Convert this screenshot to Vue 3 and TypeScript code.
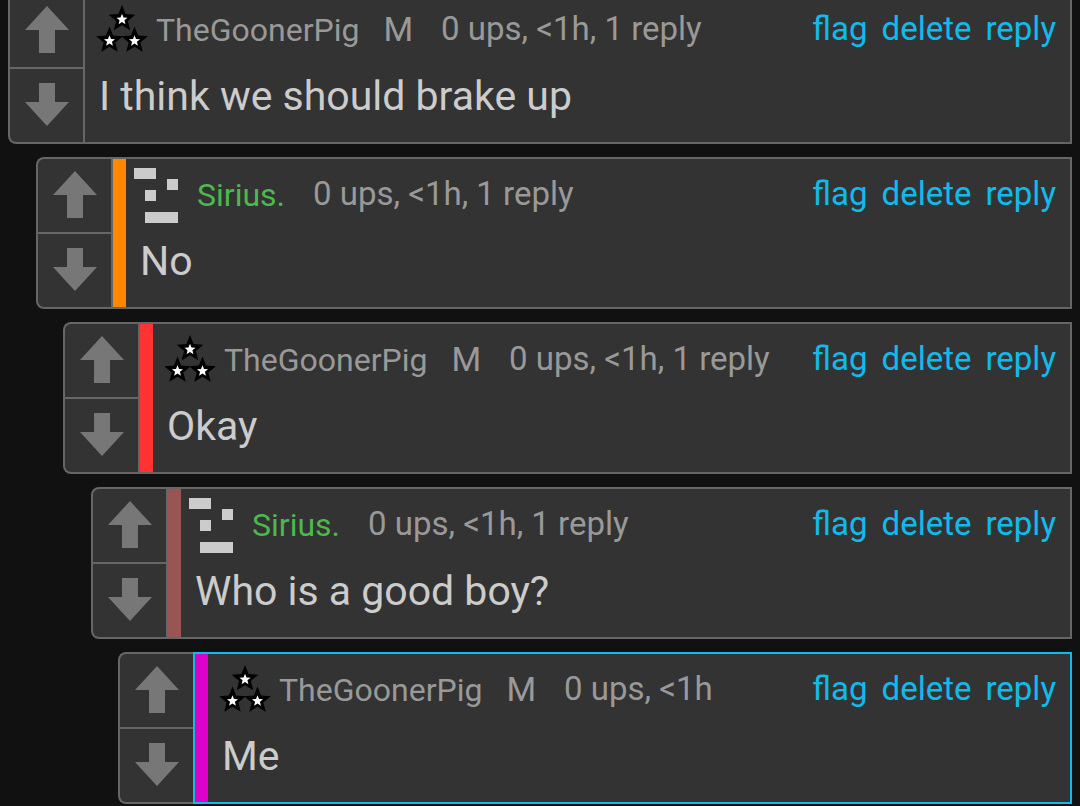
<script setup lang="ts">
interface Comment {
  id: number
  user: string
  avatar: 'stars' | 'pixels'
  highlighted: boolean
  badge?: string
  stats: string
  text: string
  stripe?: string
  active?: boolean
}

const comments: Comment[] = [
  { id: 1, user: 'TheGoonerPig', avatar: 'stars', highlighted: false, badge: 'M', stats: '0 ups, <1h, 1 reply', text: 'I think we should brake up' },
  { id: 2, user: 'Sirius.', avatar: 'pixels', highlighted: true, stats: '0 ups, <1h, 1 reply', text: 'No', stripe: 'orange' },
  { id: 3, user: 'TheGoonerPig', avatar: 'stars', highlighted: false, badge: 'M', stats: '0 ups, <1h, 1 reply', text: 'Okay', stripe: 'red' },
  { id: 4, user: 'Sirius.', avatar: 'pixels', highlighted: true, stats: '0 ups, <1h, 1 reply', text: 'Who is a good boy?', stripe: 'brown' },
  { id: 5, user: 'TheGoonerPig', avatar: 'stars', highlighted: false, badge: 'M', stats: '0 ups, <1h', text: 'Me', stripe: 'magenta', active: true },
]

const actions: string[] = ['flag', 'delete', 'reply']

// Each reply level is indented by 27.5px, snapped to whole pixels.
const indent = (depth: number) => ({ marginLeft: `${Math.round(depth * 27.5)}px` })

function starPoints(cx: number, cy: number, r: number): string {
  return Array.from({ length: 10 }, (_, i) => {
    const radius = i % 2 === 0 ? r : r * 0.44
    const angle = (Math.PI / 5) * i - Math.PI / 2
    return `${(cx + radius * Math.cos(angle)).toFixed(2)},${(cy + radius * Math.sin(angle)).toFixed(2)}`
  }).join(' ')
}

const stars = [[29, 16], [16.5, 37.5], [41.5, 37.5]].map(([x, y]) => ({
  outer: starPoints(x, y, 14),
  inner: starPoints(x, y + 0.5, 5.8),
}))
</script>

<template>
  <main class="thread">
    <article v-for="(c, depth) in comments" :key="c.id" class="comment" :style="indent(depth)">
      <div class="votes">
        <button type="button" class="vote up" aria-label="Upvote">
          <svg width="44" height="47" viewBox="0 0 44 47"><path d="M22 0 44 24H30V47H14V24H0Z" /></svg>
        </button>
        <button type="button" class="vote down" aria-label="Downvote">
          <svg width="44" height="43" viewBox="0 0 44 43"><path d="M14 0H30V19H44L22 43 0 19H14Z" /></svg>
        </button>
      </div>
      <div class="body" :class="{ active: c.active }">
        <div v-if="c.stripe" class="stripe" :class="c.stripe"></div>
        <div class="content">
          <header class="head">
            <svg v-if="c.avatar === 'stars'" class="avatar" viewBox="0 0 55 55" aria-hidden="true">
              <g v-for="s in stars" :key="s.outer">
                <polygon :points="s.outer" fill="#000" />
                <polygon :points="s.inner" fill="#fff" />
              </g>
            </svg>
            <svg v-else class="avatar" viewBox="0 0 55 55" aria-hidden="true">
              <path d="M0 0H22V11H0ZM33 11H44V22H33ZM11 22H22V33H11ZM11 44H44V55H11Z" fill="#ccc" />
            </svg>
            <a href="#" class="user" :class="{ highlighted: c.highlighted }">{{ c.user }}</a>
            <span v-if="c.badge" class="badge">{{ c.badge }}</span>
            <span class="stats">{{ c.stats }}</span>
            <nav class="actions">
              <a v-for="a in actions" :key="a" href="#">{{ a }}</a>
            </nav>
          </header>
          <p class="text">{{ c.text }}</p>
        </div>
      </div>
    </article>
  </main>
</template>

<style>
body {
  margin: 0;
  background: #111;
  overflow: hidden;
}
</style>

<style scoped>
.thread {
  display: flex;
  flex-direction: column;
  gap: 13px;
  margin: -8px 8px 0;
  font-family: Roboto, 'Liberation Sans', sans-serif;
  color: #999;
}
.comment {
  display: flex;
}
.votes {
  display: grid;
  grid-template-rows: 1fr 1fr;
  gap: 2px;
  box-sizing: border-box;
  width: 75px;
  flex: none;
  overflow: hidden;
  border: 2px solid #666;
  border-right: 0;
  border-radius: 8px 0 0 8px;
  background: #666;
}
.vote {
  display: flex;
  justify-content: center;
  align-items: flex-start;
  padding: 0;
  border: 0;
  background: #333;
  cursor: pointer;
}
.vote svg {
  fill: #777;
}
.up {
  padding-top: 12px;
}
.down {
  padding-top: 14px;
}
.body {
  display: flex;
  flex: 1;
  min-width: 0;
  border: 2px solid #666;
  background: #333;
}
.body.active {
  border-color: #10bbec;
}
.stripe {
  flex: none;
  width: 13px;
}
.orange { background: #f80; }
.red { background: #f33; }
.brown { background: #955; }
.magenta { background: #d0c; }
.content {
  flex: 1;
  min-width: 0;
  padding: 9px 14px 22px 8px;
}
.head {
  display: flex;
  align-items: flex-start;
  height: 55px;
  font-size: 33px;
  line-height: 40px;
  white-space: nowrap;
}
.avatar {
  flex: none;
  width: 55px;
  height: 55px;
  margin-right: 8px;
}
.user {
  margin-top: 7px;
  font-size: 32px;
  color: #999;
  text-decoration: none;
}
.user.highlighted {
  color: #4db84d;
}
.badge {
  margin: 6px 0 0 24px;
  font-size: 34px;
}
.stats {
  margin: 6px 0 0 28px;
}
.actions {
  display: flex;
  gap: 14px;
  margin: 6px 0 0 auto;
}
.actions a {
  color: #10bbec;
  text-decoration: none;
}
.text {
  margin: 14px 0 0 6px;
  font-size: 41px;
  line-height: 48px;
  color: #ccc;
}
</style>
